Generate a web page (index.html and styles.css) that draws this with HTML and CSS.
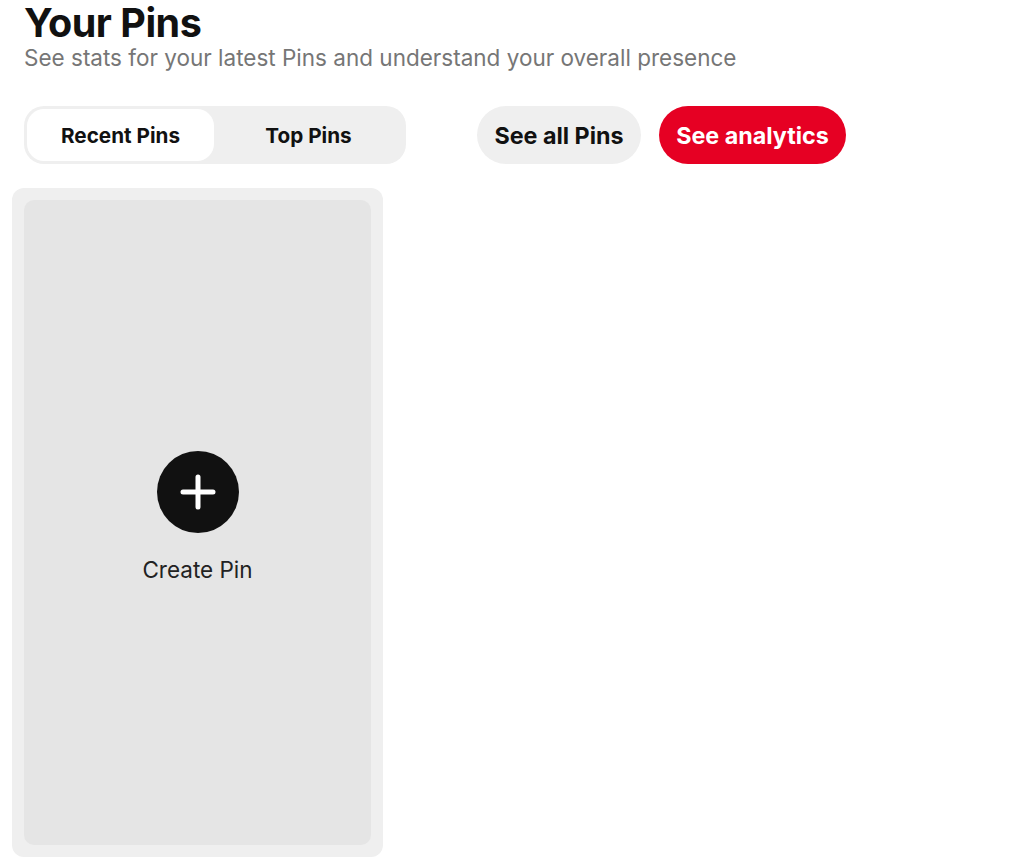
FILE: index.html
```html
<!DOCTYPE html>
<html>
<head>
<meta charset="utf-8">
<link rel="stylesheet" href="styles.css">
</head>
<body>
<main class="page">
  <header class="head">
    <h1 class="title">Your Pins</h1>
    <p class="subtitle">See stats for your latest Pins and understand your overall presence</p>
  </header>
  <div class="toolbar">
    <div class="tabs">
      <button class="tab tab-active">Recent Pins</button>
      <button class="tab">Top Pins</button>
    </div>
    <div class="actions">
      <button class="btn btn-gray">See all Pins</button>
      <button class="btn btn-red">See analytics</button>
    </div>
  </div>
  <section class="card">
    <div class="card-inner">
      <div class="create">
        <span class="plus">
          <svg width="82" height="82" viewBox="0 0 82 82"><circle cx="41" cy="41" r="41" fill="#111"/><path d="M41 26v30M26 41h30" stroke="#fff" stroke-width="5" stroke-linecap="round"/></svg>
        </span>
        <span class="create-label">Create Pin</span>
      </div>
    </div>
  </section>
</main>
</body>
</html>
```
FILE: styles.css
```css
html, body { margin: 0; padding: 0; background: #fff; }
body { font-family: Inter, "Liberation Sans", sans-serif; color: #111; }
.page { padding: 0 12px; }
.head { padding: 0 12px; }
.title { margin: 0; font-size: 39.5px; font-weight: 700; line-height: 47px; letter-spacing: -0.5px; }
.subtitle { margin: 0; font-size: 22.5px; line-height: 22px; color: #767676; }
.toolbar { display: flex; align-items: center; padding: 0 12px; margin-top: 37px; }
.tabs { display: flex; width: 382px; height: 58px; box-sizing: border-box; padding: 3px; background: #efefef; border-radius: 20px; }
.tab { flex: 0 0 auto; border: 0; background: transparent; font-family: inherit; font-size: 20.7px; font-weight: 700; color: #111; border-radius: 17px; cursor: pointer; padding: 0; }
.tab:first-child { width: 187px; }
.tab:last-child { flex: 1; }
.tab-active { background: #fff; }
.actions { display: flex; gap: 18px; margin-left: 71px; }
.btn { height: 58px; border: 0; border-radius: 29px; font-family: inherit; font-size: 23.3px; font-weight: 700; padding: 0; cursor: pointer; }
.btn-gray { background: #efefef; color: #111; width: 164px; }
.btn-red { background: #e60023; color: #fff; width: 187px; }
.card { margin-top: 24px; width: 371px; height: 669px; box-sizing: border-box; padding: 12px; background: #efefef; border-radius: 12px; }
.card-inner { height: 100%; background: #e5e5e5; border-radius: 10px; display: flex; align-items: center; justify-content: center; }
.create { display: flex; flex-direction: column; align-items: center; gap: 24px; margin-bottom: 12px; }
.plus { display: block; width: 82px; height: 82px; }
.plus svg { display: block; }
.create-label { font-size: 22.5px; line-height: 26px; color: #222; }
```
